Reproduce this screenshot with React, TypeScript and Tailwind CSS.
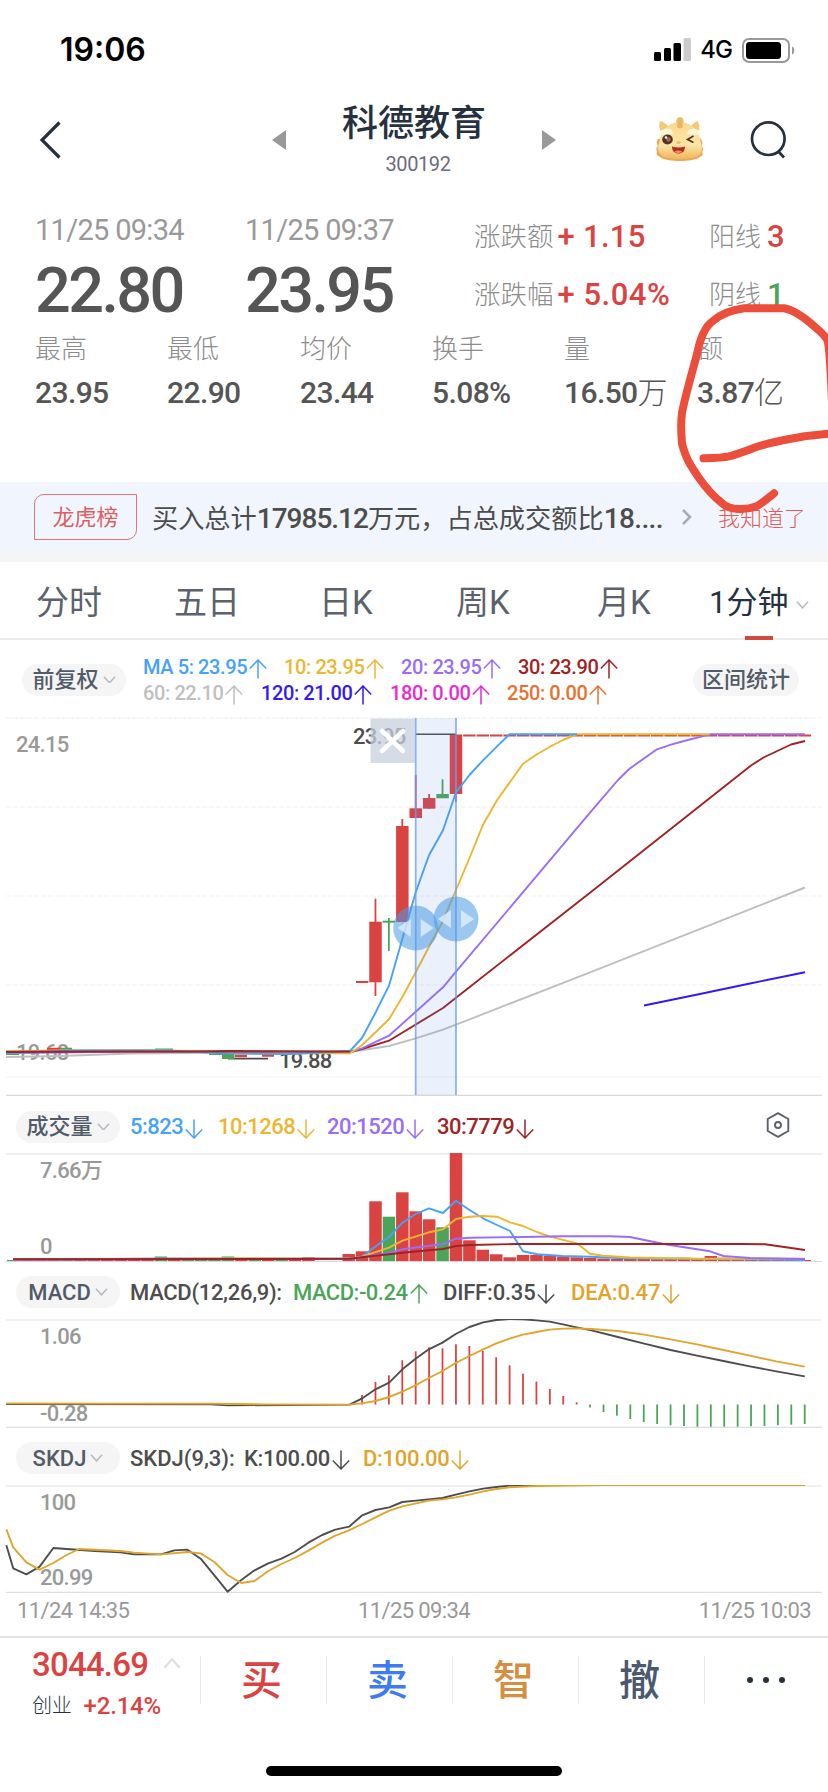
import type { ReactNode } from "react";
import clsx from "clsx";

const RED = "#d94443";
const GREEN = "#4ba559";
const BLUE = "#46a2f8";
const YELLOW = "#ebb732";
const PURPLE = "#9a6df8";
const MAROON = "#9f2325";
const GRAY = "#bfbfbf";
const INDIGO = "#3418f5";
const DARK = "#4d4d4d";
const GOLD = "#dfa52d";

// centre of bar i, counted from the left edge of the selected range
const barX = (i: number) => 415.7 + i * 13.414;

type Bar = [index: number, top: number, up?: boolean];

const candles = [
  { i: -4, top: 981, bottom: 983, high: 981, low: 983, up: true },
  { i: -3, top: 921.7, bottom: 982.3, high: 898.7, low: 996, up: true },
  { i: -2, top: 920.7, bottom: 922.7, high: 918, low: 951, up: false },
  { i: -1, top: 826, bottom: 922, high: 819, low: 922, up: true },
  { i: 0, top: 808.3, bottom: 818, high: 775, low: 818, up: true },
  { i: 1, top: 798, bottom: 808.7, high: 794, low: 808.7, up: true },
  { i: 2, top: 794, bottom: 798.3, high: 779.3, low: 798, up: false },
  { i: 3, top: 734.5, bottom: 794, high: 734.5, low: 802, up: true },
];

const volumes: Bar[] = [
  [-30, 1260, false], [-29, 1259.5, true], [-28, 1260, true], [-27, 1259.5, true], [-26, 1260, false],
  [-25, 1259.5, true], [-24, 1260, true], [-23, 1259.5, true], [-22, 1260, true], [-21, 1259.5, true],
  [-20, 1260, true], [-19, 1256.5, false], [-18, 1258.5, true], [-17, 1259, false], [-16, 1259.3, false],
  [-15, 1259, false], [-14, 1256.5, false], [-13, 1258, true], [-12, 1259, false], [-11, 1259, true],
  [-10, 1258.5, false], [-9, 1258.5, true], [-8, 1257, true], [-5, 1254, true], [-4, 1251.3, true],
  [-3, 1201.3, true], [-2, 1216.7, false], [-1, 1192.3, true], [0, 1211.3, true], [1, 1219.3, true],
  [2, 1227.3, false], [3, 1152.7, true], [4, 1240.3, true], [5, 1249.7, true], [6, 1254.3, true],
  [7, 1257.3, true], [8, 1255, true], [9, 1255, true], [10, 1255.7, true], [11, 1256.5, true],
  [12, 1257.3, true], [13, 1258, true], [14, 1258.5, true], [15, 1259, true], [16, 1258.7, true],
  [17, 1258.7, true], [18, 1259.3, true], [19, 1259.3, true], [20, 1257.7, true], [21, 1259.3, true],
  [22, 1256, true], [23, 1257.7, true], [24, 1259, true], [25, 1259, true], [26, 1259, true],
  [27, 1259.7, true], [28, 1259.7, true], [29, 1260, true],
];

const macdTops = [
  1395, 1382, 1375.3, 1360.3, 1351.3, 1347.3, 1348.3, 1344.3, 1346, 1351, 1357.3, 1365.3,
  1373.7, 1381.7, 1389, 1396, 1402.3,
];
const macdBottoms = [
  1407.5, 1412, 1415.7, 1419, 1422, 1424, 1425.3, 1426, 1426.7, 1426.7, 1426.7, 1426.7,
  1426.3, 1426, 1425.3, 1424.7, 1424,
];

function Line({ points, color, width = 1.9 }: { points: string; color: string; width?: number }) {
  return (
    <polyline
      points={points}
      fill="none"
      stroke={color}
      strokeWidth={width}
      strokeLinejoin="round"
      vectorEffect="non-scaling-stroke"
    />
  );
}

function Label({ x, y, children, color = "#999" }: { x: number; y: number; children: string; color?: string }) {
  return (
    <text x={x} y={y + 8} fill={color} fontSize="22" letterSpacing="-0.7">
      {children}
    </text>
  );
}

function Arrow({ down, className }: { down?: boolean; className?: string }) {
  return (
    <svg
      className={clsx("shrink-0", down && "rotate-180", className)}
      width="18"
      height="20"
      viewBox="0 0 18 20"
      fill="none"
      stroke="currentColor"
      strokeWidth="1.5"
    >
      <path d="M9 19.5V1M.8 9.5 9 1l8.200 8.500" />
    </svg>
  );
}

function Chevron({ className, size = 13 }: { className?: string; size?: number }) {
  return (
    <svg className={clsx("shrink-0", className)} width={size} height={size * 0.6} viewBox="0 0 13 8" fill="none" stroke="currentColor" strokeWidth="1.5">
      <path d="M.8.8 6.500 7 12.200.8" />
    </svg>
  );
}

function Pill({ children }: { children: ReactNode }) {
  return (
    <div className="flex h-8 w-[104px] shrink-0 items-center justify-center gap-1 rounded-full bg-[#f5f5f5] text-[22px] tracking-normal text-[#525b69]">
      {children}
      <Chevron className="text-[#b4b9c1]" />
    </div>
  );
}

function Reading({ text, className, down }: { text: string; className: string; down?: boolean }) {
  return (
    <div className={clsx("flex items-center whitespace-nowrap", className)}>
      {text}
      <Arrow down={down} className="ml-0.5 mt-1" />
    </div>
  );
}

function StatusBar() {
  return (
    <div className="flex h-[100px] items-center pl-[60px] pr-[33px]">
      <div className="font-['Inter'] text-[32px] font-semibold text-black">19:06</div>
      <svg className="ml-auto" width="37" height="24" viewBox="0 0 37 24">
        <rect x="0" y="14" width="7" height="9" rx="1.500" />
        <rect x="10" y="10" width="7" height="13" rx="1.500" />
        <rect x="19.500" y="5" width="7.500" height="18" rx="1.500" />
        <rect x="29.500" y="0" width="7.500" height="23" rx="1.500" fill="#ccc" />
      </svg>
      <div className="ml-[9px] mr-[10px] font-['Inter'] text-[24px] font-medium tracking-[-1px] text-black">4G</div>
      <svg width="53" height="25" viewBox="0 0 53 25">
        <rect x="1" y="1" width="46" height="23" rx="6" fill="none" stroke="#999" strokeWidth="2" />
        <rect x="4" y="4" width="35" height="17" rx="3.500" />
        <path d="M50 8.500c3 1 3 7 0 8z" fill="#999" />
      </svg>
    </div>
  );
}

function DragonIcon() {
  return (
    <svg width="49" height="46" viewBox="0 0 49 46">
      <defs>
        <linearGradient id="face" x1="0" y1="0" x2="0" y2="1">
          <stop offset="0" stopColor="#f9d98f" />
          <stop offset=".6" stopColor="#fbe6a6" />
          <stop offset="1" stopColor="#f2b65f" />
        </linearGradient>
      </defs>
      <path d="M7 17C3 12 4 6 6 5c3 1 5 3 7 5 3-2 5-3 8-3 0-4 2-6 4-6 2 0 4 2 4 6 3 0 5 1 7 3 2-2 4-4 6-5 3 3 3 8 1 12z" fill="#f3c878" />
      <path d="M3 23c-2 3-1 5 0 7-2 2-2 4-1 6-1 3 1 4 3 5 4 3 12 4 20 4s16-1 20-4c3-1 3-3 2-5 2-2 1-4 0-6 1-3 0-6-2-8z" fill="#eda853" />
      <path d="M25 7C14 7 6 13 5 24c-1 3-2 6-2 9 1 8 9 10 22 10s21-2 22-10c0-3-1-6-2-9C44 13 36 7 25 7z" fill="url(#face)" />
      <path d="M25 1.500c3 1.500 3 4 2 5.500 2 2 1 5-2 5.500-3-.5-4-3.500-2-5.500-1-1.500-1-4 2-5.500z" fill="#edb55f" />
      <path d="M4 19c1-5 5-7 10-6 3 .6 4 3 4 5-4 1.500-9 0-14 1zM46 19c-1-5-5-7-10-6-3 .6-4 3-4 5 4 1.500 9 0 14 1z" fill="#fff5d8" />
      <ellipse cx="12.500" cy="23.500" rx="5.300" ry="5" fill="#5a2f26" />
      <circle cx="13.500" cy="23.500" r="2.200" fill="#9b6e53" />
      <circle cx="11" cy="21.500" r="1.200" fill="#fff" />
      <path d="m38.500 20-6 3.500 6 3" fill="none" stroke="#56342a" strokeWidth="1.700" />
      <ellipse cx="23.500" cy="26.500" rx="2.200" ry="1.500" fill="#f1bd70" />
      <path d="M17 30.500c4 1.300 9 1.300 13 0 0 5-3 7-6.500 7S17 35 17 30.500z" fill="#b62d20" />
      <path d="M19.500 35.500c2-1.500 5.500-1.500 7.500 0-2 2.300-5.500 2.300-7.500 0z" fill="#f38a6b" />
    </svg>
  );
}

function NavBar() {
  return (
    <div className="flex h-[100px] items-start">
      <svg className="ml-[39px] mt-[21px]" width="22" height="38" viewBox="0 0 22 38" fill="none" stroke="#25313e" strokeWidth="3.200">
        <path d="M20.500 1.500 3 19l17.500 17.500" />
      </svg>
      <svg className="ml-[211px] mt-[30px]" width="14" height="20" viewBox="0 0 14 20">
        <path d="M14 0v20L0 10z" fill="#999" />
      </svg>
      <div className="flex w-[256px] flex-col items-center pt-0.5">
        <div className="h-[46px] text-[36px] font-medium leading-[44px] text-[#25313e]">科德教育</div>
        <div className="mt-1 pl-2 text-[20px] font-normal leading-6 tracking-[-0.4px] text-[#6c6c7c]">300192</div>
      </div>
      <svg className="mt-[30px]" width="14" height="20" viewBox="0 0 14 20">
        <path d="M0 0v20l14-10z" fill="#999" />
      </svg>
      <div className="ml-[99px] mt-4">
        <DragonIcon />
      </div>
      <svg className="ml-[45px] mt-5" width="38" height="40" viewBox="0 0 38 40" fill="none" stroke="#25313e" strokeWidth="2.700">
        <circle cx="19.300" cy="18.700" r="16.300" />
        <path d="m29 31 6 6.500" />
      </svg>
    </div>
  );
}

const details = [
  ["最高", "23.95"],
  ["最低", "22.90"],
  ["均价", "23.44"],
  ["换手", "5.08%"],
  ["量", "16.50万"],
  ["额", "3.87亿"],
];

function Quote() {
  return (
    <div className="h-[282px] pl-[35px] pt-3">
      <div className="flex h-[111px]">
        {[
          ["11/25 09:34", "22.80"],
          ["11/25 09:37", "23.95"],
        ].map(([time, price]) => (
          <div key={time} className="w-[210px]">
            <div className="h-9 text-[29px] font-normal leading-9 tracking-[-0.7px] text-[#999]">{time}</div>
            <div className="mt-[10px] h-[66px] text-[63px] leading-[66px] tracking-[-2.6px] text-[#555]">{price}</div>
          </div>
        ))}
        <div className="ml-[19px] flex w-[235px] flex-col gap-[22px] pt-[7px] text-[26.500px] font-light leading-9 text-[#8c8c8c]">
          <div className="flex items-center">
            涨跌额
            <span className="ml-1 whitespace-pre text-[31px] font-medium tracking-[0.300px] text-[#d94443]">+ 1.15</span>
          </div>
          <div className="flex items-center">
            涨跌幅
            <span className="ml-1 whitespace-pre text-[31px] font-medium tracking-[0.500px] text-[#d94443]">+ 5.04%</span>
          </div>
        </div>
        <div className="flex flex-col gap-[22px] pt-[7px] text-[26px] font-light leading-9 text-[#8c8c8c]">
          <div className="flex items-center">
            阳线<span className="ml-1.5 text-[31px] font-medium text-[#d94443]">3</span>
          </div>
          <div className="flex items-center">
            阴线<span className="ml-1.5 text-[31px] font-medium text-[#4ba559]">1</span>
          </div>
        </div>
      </div>
      <div className="mt-[8px] grid grid-cols-[132px_133px_132px_132px_133px_auto]">
        {details.map(([name, value]) => (
          <div key={name}>
            <div className="text-[26px] font-light leading-9 text-[#8c8c8c]">{name}</div>
            <div className="mt-2 whitespace-nowrap text-[30px] leading-9 tracking-[-0.6px] text-[#555]">
              {value.replace(/[万亿]/, "")}
              <span className="text-[30px] font-light">{value.match(/[万亿]/)?.[0]}</span>
            </div>
          </div>
        ))}
      </div>
    </div>
  );
}

function Banner() {
  return (
    <div className="flex h-20 items-center border-b-[11px] border-[#f5f5f5] bg-[#f1f6fe] pl-[34px]">
      <div className="flex h-[46px] w-[103px] items-center justify-center rounded-br-[10px] rounded-tl-[10px] border border-[#e27475] pt-0.5 text-[22px] font-normal text-[#dc5f5f]">
        龙虎榜
      </div>
      <div className="ml-[15px] w-[513px] whitespace-nowrap pt-1 text-[26.200px] font-normal text-[#4d4d4d]">
        买入总计<span className="text-[28px] font-medium tracking-[-1px]">17985.12</span>万元，占总成交额比
        <span className="text-[28px] font-medium tracking-[-0.6px]">18....</span>
      </div>
      <svg className="ml-[17px]" width="10" height="16" viewBox="0 0 10 16" fill="none" stroke="#a5acb8" strokeWidth="2.500">
        <path d="m1 1 7 7-7 7" />
      </svg>
      <div className="ml-[26px] pt-[3px] text-[22px] font-light text-[#e15a5a]">我知道了</div>
    </div>
  );
}

function PeriodTabs() {
  return (
    <div className="grid h-[78px] grid-cols-[138px_145px_137px_141px_112px_auto] items-center border-b-2 border-[#ececec] pl-9 pt-1.5 text-[33px] font-normal text-[#5b626d]">
      <div>分时</div>
      <div>五日</div>
      <div>日K</div>
      <div>周K</div>
      <div>月K</div>
      <div className="relative flex h-full items-center text-[31px] text-[#25313e]">
        1分钟
        <Chevron className="ml-2 mt-1 text-[#b4b9c1]" />
        <div className="absolute -bottom-0.5 left-9 h-1 w-7 bg-[#d14a40]" />
      </div>
    </div>
  );
}

function MaLegend() {
  return (
    <div className="flex h-[77px] items-center pl-[22px] pt-0.5">
      <Pill>前复权</Pill>
      <div className="ml-[17px] flex w-[550px] flex-col text-[20px] leading-[26px] tracking-[-0.4px]">
        <div className="grid h-[26px] grid-cols-[141px_117px_117px_auto]">
          <Reading text="MA 5: 23.95" className="text-[#46a2f8]" />
          <Reading text="10: 23.95" className="text-[#ebb732]" />
          <Reading text="20: 23.95" className="text-[#9a6df8]" />
          <Reading text="30: 23.90" className="text-[#9f2325]" />
        </div>
        <div className="grid h-[26px] grid-cols-[118px_129px_117px_auto]">
          <Reading text="60: 22.10" className="text-[#bfbfbf]" />
          <Reading text="120: 21.00" className="text-[#3418f5]" />
          <Reading text="180: 0.00" className="text-[#e92bd2]" />
          <Reading text="250: 0.00" className="text-[#ea7032]" />
        </div>
      </div>
      <div className="flex h-8 w-[106px] items-center justify-center rounded-full bg-[#f5f5f5] text-[22px] text-[#525b69]">
        区间统计
      </div>
    </div>
  );
}

function Handle({ x, y }: { x: number; y: number }) {
  return (
    <g>
      <circle cx={x} cy={y} r="22.500" fill="#4a9ae4" fillOpacity=".55" />
      <path d={`M${x - 5} ${y - 9}v18l-13-9zM${x + 5} ${y - 9}v18l13-9z`} fill="#e4f1fb" fillOpacity=".75" />
    </g>
  );
}

function PriceChart() {
  return (
    <svg className="block" width="828" height="379" viewBox="0 717 828 379">
      {[718, 807, 896, 985].map((y) => (
        <line key={y} x1="6" x2="822" y1={y} y2={y} stroke="#f5f5f5" strokeWidth="1.500" strokeDasharray="5 2" />
      ))}
      <line x1="6" x2="822" y1="1077" y2="1077" stroke="#f7f7f7" strokeWidth="1.500" />
      <line x1="6" x2="822" y1="1095.300" y2="1095.300" stroke="#d8d8d8" strokeWidth="1.300" />

      <Label x={16} y={744}>24.15</Label>
      <Label x={16} y={1052}>19.68</Label>
      <Label x={353} y={736} color={DARK}>23.95</Label>
      <Label x={279} y={1060} color={DARK}>19.88</Label>
      <path d="M228 1058.700h40" stroke={DARK} strokeWidth="1.700" />

      <path d="M47 1049h25M235 1056h12M262 1055.500h12" stroke={RED} strokeWidth="2.500" />
      <path d="M6 1054h13M60 1049h12M155 1049.500h18M209 1054h20" stroke={GREEN} strokeWidth="2" />
      <rect x="222" y="1054" width="12.500" height="5" fill={GREEN} />
      {candles.map((c) => (
        <g key={c.i} fill={c.up ? RED : GREEN}>
          <rect x={barX(c.i) - 6.2} y={c.top} width="12.500" height={c.bottom - c.top} />
          <rect x={barX(c.i) - 0.9} y={c.high} width="1.800" height={c.low - c.high} />
        </g>
      ))}
      <path d="M415.700 734.300h40" stroke={DARK} strokeWidth="1.500" />
      {Array.from({ length: 26 }, (_, k) => (
        <rect key={k} x={barX(k + 4) - 6.2} y="734.500" width="12.500" height="2" fill={RED} />
      ))}

      <Line color={INDIGO} points="644,1005.500 700,994 750,983.500 805,972.300" />
      <Line color={GRAY} points="6,1057 60,1056 130,1053.500 185,1053 350,1052 389,1046 415.700,1038.300 443,1029.700 456,1024.700 590,972.300 805,887.500" />
      <Line color={MAROON} points="6,1052 120,1051.500 230,1051 350,1052 362,1049 389,1040.700 443,1008 456,997.700 590,892.700 751,765.500 763.500,757.500 791,744.500 805,741" />
      <Line color={PURPLE} points="6,1053 60,1052.500 150,1051 230,1052.500 350,1052 362,1048.300 389,1035.700 443,987.300 456,971.700 590,812.700 618,780 629.500,768.700 657,749.300 671,744.700 684,741 710,734.300 805,734.300" />
      <Line color={YELLOW} points="6,1051.500 60,1050.500 140,1050 215,1051.500 260,1053.300 350,1053.300 362,1045.300 389,1019.300 402.500,996.700 415.700,972.300 429,946.700 443,920.700 456,890 469.500,858 483,824.700 497,800.300 523,763.700 537,754.300 550,746.700 563,740 577,734.300 710,734.300" />
      <Line color={BLUE} points="6,1053 30,1052.500 70,1050.500 120,1050.500 165,1050.500 230,1053.500 290,1054 350,1051 362,1038 376,1011.700 389,985.700 402.500,938.300 415.700,892.300 429,855.300 443,830.300 456,792.300 469.500,775 483,760.300 496,747.300 509.500,734.300 577,734.300" />
      <Line color={MAROON} points="6,1051.800 120,1051.500 350,1051.500" width={2.2} />

      <rect x="415.700" y="718" width="40.300" height="377" fill="#5a8ce6" fillOpacity=".13" />
      <path d="M415.700 718v377M456 718v377" stroke="#6b9df0" strokeOpacity=".8" strokeWidth="1.700" />
      <rect x="370.500" y="718.500" width="44.500" height="44.500" fill="#c7d0dc" fillOpacity=".75" />
      <path d="m382 731 21 20m0-20-21 20" stroke="#fff" strokeWidth="4.500" strokeLinecap="round" />
      <Handle x={415.7} y={928} />
      <Handle x={456} y={919} />
    </svg>
  );
}

function VolumeChart() {
  return (
    <>
      <div className="flex h-[57px] items-center pl-4 pt-1 text-[22px] tracking-[-0.5px]">
        <Pill>成交量</Pill>
        <div className="ml-[10px] grid w-[636px] grid-cols-[88px_109px_110px_auto]">
          <Reading down text="5:823" className="text-[#46a2f8]" />
          <Reading down text="10:1268" className="text-[#ebb732]" />
          <Reading down text="20:1520" className="text-[#9a6df8]" />
          <Reading down text="30:7779" className="text-[#9f2325]" />
        </div>
        <svg className="-mt-1" width="24" height="26" viewBox="0 0 24 26" fill="none" stroke="#5b626d" strokeWidth="1.900">
          <path d="M12 1.200 22.300 7v12L12 24.800 1.700 19V7z" strokeLinejoin="round" />
          <circle cx="12" cy="13" r="3" />
        </svg>
      </div>
      <svg className="block" width="828" height="109" viewBox="0 1153 828 109">
        <line x1="6" x2="822" y1="1153.800" y2="1153.800" stroke="#ececec" strokeWidth="1.700" />
        <line x1="6" x2="822" y1="1261.500" y2="1261.500" stroke="#d8d8d8" />
        {volumes.map(([i, top, up]) => (
          <rect key={i} x={barX(i) - 6.2} y={top} width="12.500" height={1261 - top} fill={up ? RED : GREEN} />
        ))}
        <Label x={40} y={1170}>7.66万</Label>
        <Label x={40} y={1246}>0</Label>
        <Line color={BLUE} points="13,1259.500 170,1258.500 350,1258.500 362,1256.700 376,1246 389,1237 402.500,1222.700 415.700,1214 429,1208.300 443,1213 456,1200.700 469.500,1210 483,1218.300 497,1225 510,1231 523,1251.300 537,1254.300 563,1256 590,1256.700 623,1258.300 805,1260" />
        <Line color={YELLOW} points="13,1259.500 230,1258.500 350,1258.800 362,1256.700 389,1247.700 402.500,1240.700 429,1232.300 443,1229.300 456,1219 469.500,1216.700 483,1216 497,1216.700 510,1222.300 523,1226 537,1232 550,1236.700 577,1243.300 590,1253.700 603,1255.700 630,1257.500 700,1258.700 805,1258.800" />
        <Line color={PURPLE} points="13,1259.500 350,1259 362,1257.300 389,1253 402.500,1249.300 443,1244 456,1238.700 469.500,1237.700 523,1237 563,1236.300 610,1236.300 630,1237 665,1244.300 710,1251.300 723.500,1256 750,1258 805,1259" />
        <Line color={MAROON} points="13,1259.300 350,1258.800 362,1257.300 402.500,1252.700 429,1250.300 443,1249 456,1246 470,1245 517,1244 740,1244 765,1244.300 805,1250" />
      </svg>
    </>
  );
}

function MacdChart() {
  return (
    <>
      <div className="flex h-[57px] items-center pl-4 pt-[3px] text-[22px] tracking-[-0.5px]">
        <Pill>MACD</Pill>
        <div className="ml-[10px] grid grid-cols-[163px_150px_128px_auto] text-[#4d4d4d]">
          <div className="tracking-[-0.3px]">MACD(12,26,9):</div>
          <Reading text="MACD:-0.24" className="text-[#4ba559]" />
          <Reading down text="DIFF:0.35" className="tracking-[-0.2px] text-[#4d4d4d]" />
          <Reading down text="DEA:0.47" className="tracking-[-0.2px] text-[#dfa52d]" />
        </div>
      </div>
      <svg className="block" width="828" height="109" viewBox="0 1319 828 109">
        <line x1="6" x2="822" y1="1320" y2="1320" stroke="#ececec" strokeWidth="1.700" />
        <line x1="6" x2="822" y1="1427.300" y2="1427.300" stroke="#d8d8d8" />
        <Label x={40} y={1336}>1.06</Label>
        <Label x={40} y={1412.5}>-0.28</Label>
        {macdTops.map((top, k) => (
          <rect key={k} x={barX(k - 4) - 0.9} y={top} width="1.800" height={1404.5 - top} fill={RED} />
        ))}
        {macdBottoms.map((bottom, k) => (
          <rect key={k} x={barX(k + 13) - 0.9} y="1404.500" width="1.800" height={bottom - 1404.5} fill={GREEN} />
        ))}
        <g transform="translate(0 1260) scale(.52806 .33333)">
          <Line color={DARK} points="12,432 400,433 430,436 662,434 685,416 711,388 737,368 762,328 787,296 812,268 838,248 863,222 889,201 915,187 940,180 965,177 990,178 1016,181 1041,185 1066,193 1092,202 1120,211 1170,231 1220,251 1270,270 1320,287 1370,303 1420,319 1470,334 1524,349" />
          <Line color={GOLD} points="12,430 200,431 400,431 500,433 662,434 685,430 711,423 737,411 762,395 787,376 812,354 838,333 863,309 889,288 915,268 940,250 965,236 990,224 1016,216 1041,209 1066,206 1092,205 1120,207 1170,213 1220,224 1270,238 1320,253 1370,270 1420,287 1470,304 1524,320" />
        </g>
      </svg>
    </>
  );
}

function SkdjChart() {
  return (
    <>
      <div className="flex h-[57px] items-center pl-4 pt-[3px] text-[22px] tracking-[-0.3px]">
        <Pill>SKDJ</Pill>
        <div className="ml-[10px] grid grid-cols-[114px_119px_auto] text-[#4d4d4d]">
          <div className="tracking-[0px]">SKDJ(9,3):</div>
          <Reading down text="K:100.00" className="text-[#4d4d4d]" />
          <Reading down text="D:100.00" className="text-[#dfa52d]" />
        </div>
      </div>
      <svg className="block" width="828" height="108" viewBox="0 1485 828 108">
        <line x1="6" x2="822" y1="1486" y2="1486" stroke="#ececec" strokeWidth="1.700" />
        <line x1="6" x2="822" y1="1592.300" y2="1592.300" stroke="#d8d8d8" />
        <Label x={40} y={1502}>100</Label>
        <Label x={40} y={1577}>20.99</Label>
        <g transform="translate(0 1430) scale(.52806 .33333)">
          <Line color={DARK} points="12,346 25,415 50,433 75,410 101,354 126,357 180,363 228,367 254,373 305,373 330,361 355,359 380,386 406,436 431,485 457,450 482,421 508,400 533,386 558,366 584,338 610,315 635,299 661,290 686,256 711,240 737,232 762,216 788,212 838,204 863,194 889,184 915,176 940,171 965,167 1016,165 1524,165" />
          <Line color={GOLD} points="12,298 25,352 50,397 75,419 101,399 126,375 150,357 228,363 254,368 305,373 355,366 380,370 406,396 431,435 457,459 482,453 508,423 533,402 558,384 584,362 610,338 635,317 661,301 686,282 711,262 737,242 762,229 812,212 838,208 863,202 889,194 915,184 940,177 965,172 1016,168 1143,165.500 1524,165.500" />
        </g>
      </svg>
      <div className="flex h-[43px] items-center justify-between px-[17px] pb-2 text-[22px] font-normal tracking-[-0.6px] text-[#999]">
        <div>11/24 14:35</div>
        <div>11/25 09:34</div>
        <div>11/25 10:03</div>
      </div>
    </>
  );
}

const actions = [
  ["买", "text-[#d94443]"],
  ["卖", "text-[#3f7bf0]"],
  ["智", "text-[#d68e40]"],
  ["撤", "text-[#4c5870]"],
];

function BottomBar() {
  return (
    <div className="flex h-[156px] flex-col border-t-2 border-[#e3e3e3]">
      <div className="flex h-[84px]">
        <div className="w-[200px] pl-8 pt-2">
          <div className="flex items-center gap-[15px] text-[33px] leading-[38px] tracking-[-0.8px] text-[#d94443]">
            3044.69
            <Chevron size={18} className="-mt-1 rotate-180 text-[#dcdee2]" />
          </div>
          <div className="mt-1.5 flex items-center gap-3 text-[24px] leading-8 tracking-[-0.2px] text-[#d94443]">
            <span className="text-[20px] font-light text-[#25313e]">创业</span>
            +2.14%
          </div>
        </div>
        {actions.map(([name, color]) => (
          <div key={name} className="flex w-[126px] items-center">
            <div className="h-12 w-px bg-[#e9e9e9]" />
            <div className={clsx("flex-1 pr-1 pt-[3px] text-center text-[41px] font-medium", color)}>{name}</div>
          </div>
        ))}
        <div className="flex flex-1 items-center">
          <div className="h-12 w-px bg-[#e9e9e9]" />
          <div className="ml-[42px] flex gap-2.5">
            <span className="size-[6px] rounded-full bg-[#25313e]" />
            <span className="size-[6px] rounded-full bg-[#25313e]" />
            <span className="size-[6px] rounded-full bg-[#25313e]" />
          </div>
        </div>
      </div>
      <div className="mx-auto mt-[44px] h-[10px] w-[296px] rounded-full bg-black" />
    </div>
  );
}

export default function App() {
  return (
    <div className="relative h-[1792px] w-[828px] overflow-hidden bg-white font-['Roboto','Noto_Sans_CJK_SC',sans-serif] font-medium">
      <StatusBar />
      <NavBar />
      <Quote />
      <Banner />
      <PeriodTabs />
      <MaLegend />
      <PriceChart />
      <VolumeChart />
      <MacdChart />
      <SkdjChart />
      <BottomBar />

      {/* Hand-drawn marker over the turnover figure */}
      <svg className="pointer-events-none absolute left-0 top-0" width="828" height="560" viewBox="0 0 828 560" fill="none" stroke="#eb4f3c" strokeWidth="8" strokeLinecap="round" strokeLinejoin="round">
        <path d="M774 493.300C768 498 762 503.500 756 506.500C748 509.500 730 511 722.500 503.500C714 497 706 488 699 478C690 465 686 459 682 443.500C681 432 681 420 682 413C685 396 693 370 697.500 352C701 335 707 325 713 321C722 313 735 309.500 744 308.300H784C795 310 806 319 815 327C821 332 827 338 828 342C831 360 831 390 833 420" />
        <path d="M703.500 458.300C714 458 724 457.500 729 456.300C743 452.500 756 446.500 769 443.300C783 440 795 438 803 436.500C812 435.500 820 434.500 830 433.500" />
      </svg>
    </div>
  );
}
